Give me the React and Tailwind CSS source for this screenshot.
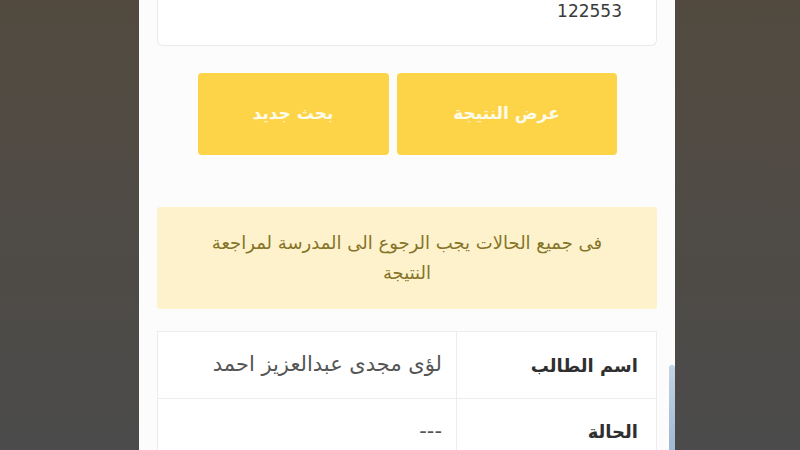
export default function App() {
  const rows = [
    { label: "اسم الطالب", value: "لؤى مجدى عبدالعزيز احمد" },
    { label: "الحالة", value: "---" },
  ];

  return (
    <div
      className="w-[800px] h-[450px] overflow-hidden flex pl-[139px] bg-gradient-to-b from-[#524a3f] to-[#4b4b4b]"
      style={{ fontFamily: '"DejaVu Sans", "Noto Sans", sans-serif' }}
    >
      <div dir="rtl" className="relative w-[536px] h-full bg-[#fcfcfc] px-[18px]">
        {/* input box, top cut off */}
        <div className="h-[46px] bg-white border-x border-b border-[#ebebeb] rounded-b-md px-[34px] pt-[1px]">
          <p className="text-[17px] leading-[20px] text-[#3a3a3a]">122553</p>
        </div>

        <div className="flex justify-center gap-[8px] mt-[27px]">
          <button className="w-[220px] h-[82px] rounded-[4px] bg-[#fdd448] text-[#fffbea] text-[17px] font-bold">
            عرض النتيجة
          </button>
          <button className="w-[191px] h-[82px] rounded-[4px] bg-[#fdd448] text-[#fffbea] text-[17px] font-bold">
            بحث جديد
          </button>
        </div>

        <div className="mt-[52px] h-[102px] bg-[#fdf2cc] rounded-[3px] flex items-center justify-center text-center px-4">
          <p className="text-[18px] leading-[30px] text-[#857428]">
            فى جميع الحالات يجب الرجوع الى المدرسة لمراجعة
            <br />
            النتيجة
          </p>
        </div>

        <div className="mt-[22px] bg-white border border-[#ececec]">
          {rows.map((r, i) => (
            <div key={i} className={`flex h-[66px] ${i > 0 ? "border-t border-[#ececec]" : ""}`}>
              <div className="w-[200px] border-l border-[#ececec] flex items-center px-[18px] text-[18px] font-bold text-[#2f2f2f]">
                {r.label}
              </div>
              <div className="flex-1 flex items-center px-[14px] text-[21px] text-[#555]">
                {r.value}
              </div>
            </div>
          ))}
        </div>

        {/* scroll indicator */}
        <div className="absolute left-[530px] top-[365px] w-[6px] h-[85px] rounded-t-sm bg-gradient-to-b from-[#c3d4e4] to-[#9fb9d2]" />
      </div>
    </div>
  );
}
